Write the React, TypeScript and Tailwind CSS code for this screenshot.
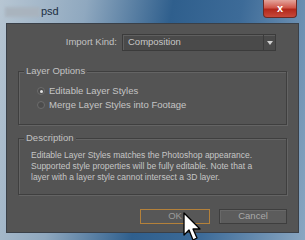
import React from "react";

const font = { fontFamily: '"Liberation Sans", "DejaVu Sans", sans-serif' };

function Radio({ checked }: { checked?: boolean }) {
  return (
    <span className="w-[8px] h-[8px] rounded-full border border-[#6c6c6c] bg-[#4c4c4c] flex items-center justify-center shrink-0">
      {checked && <span className="w-[3px] h-[3px] rounded-full bg-[#e0e0e0]" />}
    </span>
  );
}

function Group({ title, className, children }: { title: string; className?: string; children: React.ReactNode }) {
  return (
    <div className={"relative mx-[11px] border border-[#3f3f3f] shadow-[1px_1px_0_#646464,inset_1px_1px_0_#646464] " + (className ?? "")}>
      <span className="absolute left-[5px] top-[-7px] px-[2px] bg-[#545454] text-[9.5px] leading-[12px] text-[#c2c2c2]">{title}</span>
      {children}
    </div>
  );
}

export default function App() {
  return (
    <div
      className="w-[305px] h-[240px] overflow-hidden relative flex flex-col bg-[linear-gradient(100deg,#b7c6d3_0%,#8fa8bf_25%,#2f5f8d_50%,#3d6b98_70%,#8aa7c2_100%)]"
      style={font}
    >
      {/* title bar */}
      <div className="h-[23px] flex items-center relative shrink-0">
        <div className="ml-[5px] w-[35px] h-[10px] bg-[#a9b3bd] blur-[1.5px] opacity-90" />
        <span className="text-[11px] text-[#1c2d3e] leading-none ml-[1px] mt-[-1px]">psd</span>
        <div className="absolute right-[8px] top-0 w-[34px] h-[18px] rounded-b-[4px] border border-[#6b2a25] border-t-0 bg-[linear-gradient(180deg,#e4a59c_0%,#d0574a_45%,#b2281b_55%,#c7483a_100%)] flex items-center justify-center">
          <span className="text-white text-[11px] font-bold leading-none">x</span>
        </div>
      </div>
      {/* client */}
      <div className="mx-[6px] h-[210px] bg-[#545454] border border-[#3a4048] flex flex-col shrink-0 text-[#c4c4c4]">
        <div className="flex items-center mt-[10px] h-[17px]">
          <span className="w-[115px] text-right text-[9.5px] pr-[5px] text-[#c2c2c2]">Import Kind:</span>
          <div className="w-[154px] h-[17px] border border-[#3b3b3b] bg-[#4a4a4a] shadow-[inset_1px_1px_0_#5f5f5f] flex items-center">
            <span className="flex-1 pl-[5px] text-[9.5px] text-[#c8c8c8]">Composition</span>
            <div className="w-[12px] h-full border-l border-[#3b3b3b] flex items-center justify-center">
              <svg width="6" height="4" viewBox="0 0 6 4"><path d="M0 0H6L3 4Z" fill="#d0d0d0" /></svg>
            </div>
          </div>
        </div>
        <Group title="Layer Options" className="mt-[20px] h-[54px]">
          <div className="flex flex-col pl-[18px] pt-[14px] gap-[4px] text-[9.5px] leading-[10px]">
            <div className="flex items-center gap-[4px]"><Radio checked /><span>Editable Layer Styles</span></div>
            <div className="flex items-center gap-[4px]"><Radio /><span>Merge Layer Styles into Footage</span></div>
          </div>
        </Group>
        <Group title="Description" className="mt-[13px] h-[57px]">
          <p className="pl-[12px] pt-[11px] text-[8.5px] leading-[11px] text-[#c6c6c6] whitespace-nowrap">
            Editable Layer Styles matches the Photoshop appearance.<br />
            Supported style properties will be fully editable. Note that a<br />
            layer with a layer style cannot intersect a 3D layer.
          </p>
        </Group>
        <div className="flex justify-end gap-[9px] mr-[11px] mt-[14px]">
          <div className="w-[70px] h-[15px] border border-[#b4813a] bg-[#575757] flex items-center justify-center text-[9.5px] text-[#9c9c9c]">OK</div>
          <div className="w-[68px] h-[15px] border border-[#3e3e3e] bg-[#5c5c5c] shadow-[inset_1px_1px_0_#686868] flex items-center justify-center text-[9.5px] text-[#a9a9a9]">Cancel</div>
        </div>
      </div>
      <svg className="absolute left-[183px] top-[212px]" width="22" height="30" viewBox="0 0 22 30">
        <path d="M1 1 L1 23 L6 18 L10 28 L14 26 L10 17 L17 17 Z" fill="#fff" stroke="#000" strokeWidth="1.3" strokeLinejoin="round" />
      </svg>
    </div>
  );
}
